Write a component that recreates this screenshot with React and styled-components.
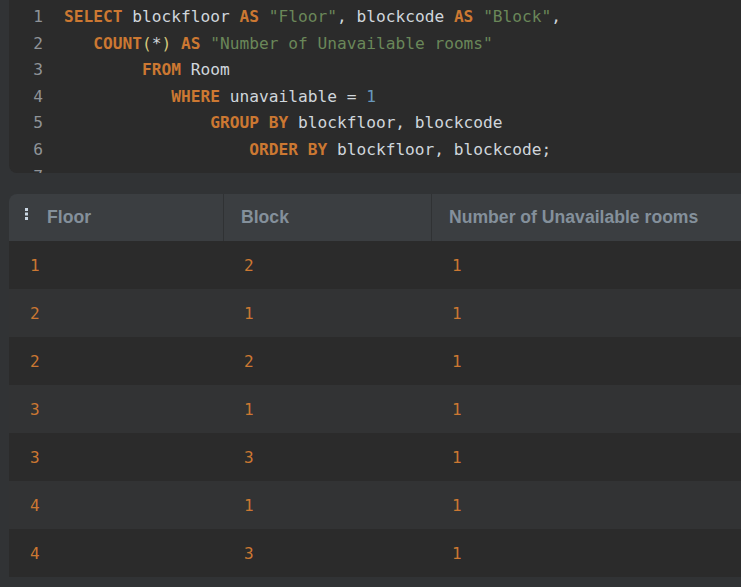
import React from 'react';
import styled, { createGlobalStyle } from 'styled-components';

const GlobalStyle = createGlobalStyle`
  html, body {
    margin: 0;
    padding: 0;
    background: #313335;
    overflow: hidden;
  }
`;

const Page = styled.div`
  width: 741px;
  height: 587px;
  padding-left: 9px;
  box-sizing: border-box;
  overflow: hidden;
  background: #313335;
`;

const Editor = styled.div`
  height: 173px;
  background: #2b2b2b;
  border-bottom-left-radius: 8px;
  overflow: hidden;
  padding-top: 4px;
  box-sizing: border-box;
  font-family: "DejaVu Sans Mono", "Liberation Mono", monospace;
  font-size: 16.2px;
`;

const Line = styled.div`
  display: flex;
  height: 26.6px;
  line-height: 26.6px;
  white-space: pre;
`;

const LineNo = styled.span`
  width: 34px;
  text-align: right;
  color: #8f9398;
  flex-shrink: 0;
`;

const Code = styled.span`
  padding-left: 21px;
  color: #d0d6dc;
`;

const Kw = styled.span`
  color: #cc7832;
  font-weight: bold;
`;

const Str = styled.span`
  color: #6a8759;
`;

const Num = styled.span`
  color: #6897bb;
`;

const Paren = styled.span`
  color: #d4c87c;
`;

const Table = styled.div`
  margin-top: 21px;
  border-top-left-radius: 8px;
  overflow: hidden;
`;

const Grid = styled.div`
  display: grid;
  grid-template-columns: 214px 208px 1fr;
`;

const HeaderRow = styled(Grid)`
  height: 47px;
  background: #3b3e41;
`;

const HeadCell = styled.div`
  display: flex;
  align-items: center;
  padding-left: ${(p) => (p.first ? '16px' : '17px')};
  gap: 19px;
  border-left: ${(p) => (p.first ? 'none' : '1px solid #303234')};
  font-family: "Liberation Sans", Arial, sans-serif;
  font-weight: bold;
  font-size: 17.6px;
  color: #84909b;
`;

const Row = styled(Grid)`
  height: 48px;
  background: ${(p) => (p.odd ? '#2b2b2b' : '#323334')};
`;

const Cell = styled.div`
  display: flex;
  align-items: center;
  padding-left: ${(p) => (p.first ? '21px' : '21px')};
  font-family: "DejaVu Sans Mono", "Liberation Mono", monospace;
  font-size: 16px;
  color: #cc7832;
`;

const Handle = () => (
  <svg width="3" height="12" viewBox="0 0 3 12" style={{ marginTop: -8 }}>
    <rect x="0" y="0" width="3" height="3" fill="#c9d6e2" />
    <rect x="0" y="4.5" width="3" height="3" fill="#c9d6e2" />
    <rect x="0" y="9" width="3" height="3" fill="#c9d6e2" />
  </svg>
);

const rows = [
  [1, 2, 1],
  [2, 1, 1],
  [2, 2, 1],
  [3, 1, 1],
  [3, 3, 1],
  [4, 1, 1],
  [4, 3, 1],
];

export default function App() {
  return (
    <>
      <GlobalStyle />
      <Page>
        <Editor>
          <Line>
            <LineNo>1</LineNo>
            <Code><Kw>SELECT</Kw> blockfloor <Kw>AS</Kw> <Str>"Floor"</Str>, blockcode <Kw>AS</Kw> <Str>"Block"</Str>,</Code>
          </Line>
          <Line>
            <LineNo>2</LineNo>
            <Code>{'   '}<Kw>COUNT</Kw><Paren>(</Paren>*<Paren>)</Paren> <Kw>AS</Kw> <Str>"Number of Unavailable rooms"</Str></Code>
          </Line>
          <Line>
            <LineNo>3</LineNo>
            <Code>{'        '}<Kw>FROM</Kw> Room</Code>
          </Line>
          <Line>
            <LineNo>4</LineNo>
            <Code>{'           '}<Kw>WHERE</Kw> unavailable = <Num>1</Num></Code>
          </Line>
          <Line>
            <LineNo>5</LineNo>
            <Code>{'               '}<Kw>GROUP</Kw> <Kw>BY</Kw> blockfloor, blockcode</Code>
          </Line>
          <Line>
            <LineNo>6</LineNo>
            <Code>{'                   '}<Kw>ORDER</Kw> <Kw>BY</Kw> blockfloor, blockcode;</Code>
          </Line>
          <Line>
            <LineNo>7</LineNo>
            <Code />
          </Line>
        </Editor>
        <Table>
          <HeaderRow>
            <HeadCell first>
              <Handle />
              Floor
            </HeadCell>
            <HeadCell>Block</HeadCell>
            <HeadCell>Number of Unavailable rooms</HeadCell>
          </HeaderRow>
          {rows.map((r, i) => (
            <Row key={i} odd={i % 2 === 0}>
              <Cell first>{r[0]}</Cell>
              <Cell>{r[1]}</Cell>
              <Cell>{r[2]}</Cell>
            </Row>
          ))}
        </Table>
      </Page>
    </>
  );
}
